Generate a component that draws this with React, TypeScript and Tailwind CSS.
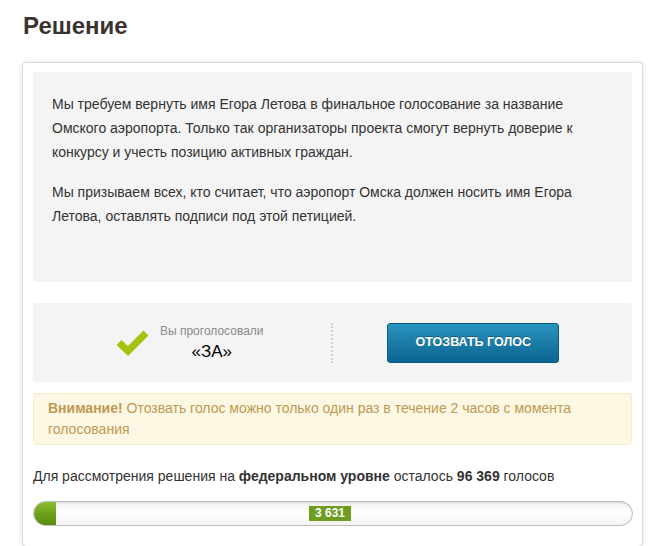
import React from "react";

const font = { fontFamily: '"Liberation Sans", Arial, sans-serif' };

const CheckMark = () => (
  <svg width="34" height="28" viewBox="0 0 34 28" className="shrink-0">
    <path d="M3 13.5 L12 22 L30 4" fill="none" stroke="#a3c40f" strokeWidth="7" strokeLinejoin="miter" />
  </svg>
);

export default function App() {
  return (
    <div className="min-h-[546px] w-[661px] bg-white text-[#333]" style={font}>
      <h2 className="pl-[23px] pt-[12px] text-[24px] font-bold leading-[28px] text-[#3b3330]">Решение</h2>

      <div className="ml-[22px] mt-[22px] w-[621px] rounded-[4px] border border-[#dcdcdc] bg-white px-[10px] pt-[9px] pb-[20px] shadow-[0_0_5px_rgba(0,0,0,0.12)]">
        <div className="h-[210px] rounded-[3px] bg-[#f4f4f4] px-[19px] pt-[20px] text-[14px] leading-[24px] text-[#333]">
          <p>
            Мы требуем вернуть имя Егора Летова в финальное голосование за название
            <br />
            Омского аэропорта. Только так организаторы проекта смогут вернуть доверие к
            <br />
            конкурсу и учесть позицию активных граждан.
          </p>
          <p className="mt-[16px]">
            Мы призываем всех, кто считает, что аэропорт Омска должен носить имя Егора
            <br />
            Летова, оставлять подписи под этой петицией.
          </p>
        </div>

        <div className="mt-[21px] flex h-[79px] items-center rounded-[3px] bg-[#f4f4f4]">
          <div className="flex flex-1 items-center justify-center gap-[10px] pl-[16px]">
            <CheckMark />
            <div className="flex flex-col items-center">
              <span className="text-[12px] leading-[16px] text-[#8a8a8a]">Вы проголосовали</span>
              <span className="mt-[3px] text-[17px] leading-[20px] text-black">«ЗА»</span>
            </div>
          </div>
          <div className="h-[40px] border-l-2 border-dotted border-[#cfcfcf]" />
          <div className="flex flex-1 items-center justify-center pr-[18px]">
            <button className="h-[40px] w-[172px] rounded-[3px] border border-[#0d5c85] bg-gradient-to-b from-[#2a93c0] to-[#0b6590] text-[12.5px] font-bold text-white [text-shadow:0_-1px_0_rgba(0,0,0,0.3)]">
              ОТОЗВАТЬ ГОЛОС
            </button>
          </div>
        </div>

        <div className="mt-[11px] rounded-[3px] border border-[#f7ecc6] bg-[#fcf8e3] px-[14px] py-[4px] text-[14px] leading-[21px] text-[#c09853]">
          <b>Внимание!</b> Отозвать голос можно только один раз в течение 2 часов с момента
          <br />
          голосования
        </div>

        <p className="mt-[20px] text-[14px] leading-[22px] text-[#333]">
          Для рассмотрения решения на <b>федеральном уровне</b> осталось <b>96 369</b> голосов
        </p>

        <div className="relative mt-[14px] h-[25px] w-[600px] overflow-hidden rounded-full border border-[#bdbdbd] bg-gradient-to-b from-[#f2f2f2] via-white to-[#f4f4f4] shadow-[inset_0_1px_2px_rgba(0,0,0,0.1)]">
          <div
            className="h-full rounded-l-full bg-gradient-to-b from-[#8bbb2e] via-[#6ea21a] to-[#5a8c10]"
            style={{ width: "22px" }}
          />
          <span className="absolute left-[275px] top-[4px] h-[15px] bg-[#6e9c1f] px-[6px] text-[12px] font-bold leading-[15px] text-white">
            3 631
          </span>
        </div>
      </div>
    </div>
  );
}
